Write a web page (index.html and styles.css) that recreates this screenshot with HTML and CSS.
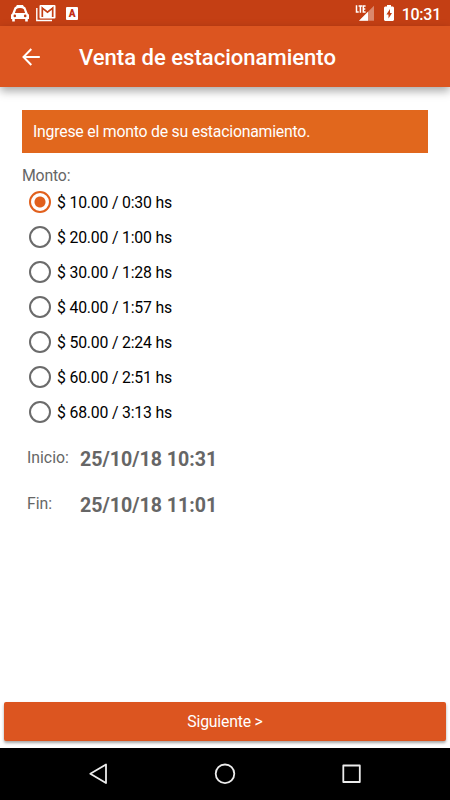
FILE: index.html
```
<!DOCTYPE html>
<html lang="es">
<head>
<meta charset="utf-8">
<title>Venta de estacionamiento</title>
<link rel="stylesheet" href="styles.css">
</head>
<body>
<div class="status">
  <svg class="car" width="18" height="18" viewBox="0 0 18 18"><path fill="#fff" fill-rule="evenodd" d="M5.800 0H12l.6 1.200 1.800 1.200 2.300 6L18 9.800V14h-1.200v2.500h-2.600V14H3.800v2.500H1.200V14H0V9.800l1.200-1.400 2.300-6 1.800-1.200ZM5.200 4.200 3.900 8h10.200l-1.300-3.800Q11.500 3 9 3T5.200 4.200ZM3.800 9.600a1.300 1.300 0 1 0 0 2.600 1.300 1.300 0 0 0 0-2.600Zm10.400 0a1.300 1.300 0 1 0 0 2.600 1.300 1.300 0 0 0 0-2.600Z"/></svg>
  <svg class="mail" width="20" height="17" viewBox="0 0 20 17"><path d="M.8 3v12.500H16" fill="none" stroke="#fff" stroke-width="1.400"/><rect x="3.500" y="0" width="16" height="13.500" rx="1" fill="#fff"/><path d="M6.300 12V3l5.200 4.200L16.700 3v9" fill="none" stroke="#c43f14" stroke-width="1.700"/><path d="M6.500 1.300 11.500 5l5-3.700" fill="none" stroke="#fff" stroke-width="1"/></svg>
  <span class="abox">A</span>
  <span class="grow"></span>
  <svg class="signal" width="20" height="17" viewBox="0 0 20 17"><path d="M4 15.700 19 .7v15Z" fill="#fff" opacity=".38"/><path d="M4 15.700l9-9v9Z" fill="#fff"/><path d="M0 0h11v8H0Z" fill="#c43f14"/><path d="M1.500 .3v6.700h2.200M3.600 1h3.600M5.400 1v6.700M10.600 1H8.300v6h2.300M8 4h2.300" fill="none" stroke="#fff" stroke-width="1.500"/></svg>
  <svg class="battery" width="10" height="17" viewBox="0 0 10 17"><path fill="#fff" d="M3 0h4v1.500h2l1 1V15l-1 1H1l-1-1V2.500l1-1h2Z"/><path fill="#c43f14" d="M6 4 2.400 9.500H4.500v4L8 8H6Z"/></svg>
  <span class="clock">10:31</span>
</div>
<header class="bar">
  <svg class="back" width="18" height="18" viewBox="0 0 18 18"><path d="M17.800 9H1.500M9.300 1 1.500 9l7.800 8" fill="none" stroke="#fff" stroke-width="2"/></svg>
  <h1>Venta de estacionamiento</h1>
</header>
<main>
  <p class="banner">Ingrese el monto de su estacionamiento.</p>
  <p class="label">Monto:</p>
  <ul class="options">
    <li><i class="radio on"></i>$ 10.00 / 0:30 hs</li>
    <li><i class="radio"></i>$ 20.00 / 1:00 hs</li>
    <li><i class="radio"></i>$ 30.00 / 1:28 hs</li>
    <li><i class="radio"></i>$ 40.00 / 1:57 hs</li>
    <li><i class="radio"></i>$ 50.00 / 2:24 hs</li>
    <li><i class="radio"></i>$ 60.00 / 2:51 hs</li>
    <li><i class="radio"></i>$ 68.00 / 3:13 hs</li>
  </ul>
  <dl class="times">
    <dt>Inicio:</dt><dd>25/10/18 10:31</dd>
    <dt>Fin:</dt><dd>25/10/18 11:01</dd>
  </dl>
</main>
<button class="next">Siguiente &gt;</button>
<nav>
  <svg width="450" height="52" viewBox="0 0 450 52" fill="none" stroke="#ececec" stroke-width="1.800" stroke-linejoin="round"><path d="M106 16.500v18.500L90.300 25.800Z"/><circle cx="225" cy="25.800" r="9.300"/><rect x="343.300" y="17.500" width="16.500" height="16.500"/></svg>
</nav>
</body>
</html>
```
FILE: styles.css
```
* { box-sizing: border-box; margin: 0; padding: 0; }
body {
  width: 450px; height: 800px; overflow: hidden;
  display: flex; flex-direction: column;
  background: #fff; color: #000;
  font-family: Roboto, sans-serif; font-size: 15.8px; letter-spacing: -.18px;
}
svg { display: block; flex: none; }
.status {
  height: 26px; flex: none; display: flex; align-items: flex-start;
  padding: 5px 9px 0 11px; background: #c43f14; color: #fff;
}
.mail { margin-left: 7px; }
.abox {
  width: 12px; height: 13px; margin: 2px 0 0 10px; border-radius: 1px;
  background: #fff; color: #c42c14; font-size: 10px; font-weight: 900;
  line-height: 13px; text-align: center;
}
.grow { flex: 1; }
.battery { margin-left: 9px; }
.clock { margin-left: 8px; font-size: 16px; font-weight: 500; line-height: 19px; letter-spacing: -.25px; }
.bar {
  height: 61px; flex: none; display: flex; align-items: center;
  padding: 0 22px; background: #dc5520; color: #fff;
  box-shadow: 0 4px 9px rgba(0, 0, 0, .35);
}
.bar h1 { margin: 2px 0 0 39px; font-size: 22.05px; font-weight: 500; white-space: nowrap; letter-spacing: 0; }
main { flex: 1; padding: 23px 22px 0; }
.banner {
  height: 42.5px; padding-left: 11px; line-height: 44px; letter-spacing: -.21px;
  background: #e1671d; color: #fff;
}
.label { height: 32.5px; padding-top: 13px; line-height: 19px; color: #666; }
.options { list-style: none; }
.options li { height: 35px; display: flex; align-items: center; padding-left: 6.5px; }
.radio {
  width: 22px; height: 22px; margin: -1px 6.5px 0 0; border: 2px solid #6b6b6b;
  border-radius: 50%;
}
.radio.on { border-color: #e1601d; background: radial-gradient(circle, #e1601d 5px, transparent 6px); }
.times {
  display: grid; grid-template-columns: 53px 1fr; grid-auto-rows: 46px;
  padding: 16px 0 0 5px; color: #666; letter-spacing: 0;
}
.times dt { line-height: 20px; padding-top: 2px; }
.times dd { font-size: 19.6px; font-weight: 700; line-height: 26px; padding-top: 1px; }
.next {
  height: 39.5px; flex: none; margin: 0 4px 7px; border: 0; border-radius: 2px;
  background: #dc5520; color: #fff; font: 15.8px/40px Roboto, sans-serif; letter-spacing: -.2px;
  box-shadow: 0 2px 3px rgba(0, 0, 0, .35);
}
nav { height: 52px; flex: none; background: #000; }
```
